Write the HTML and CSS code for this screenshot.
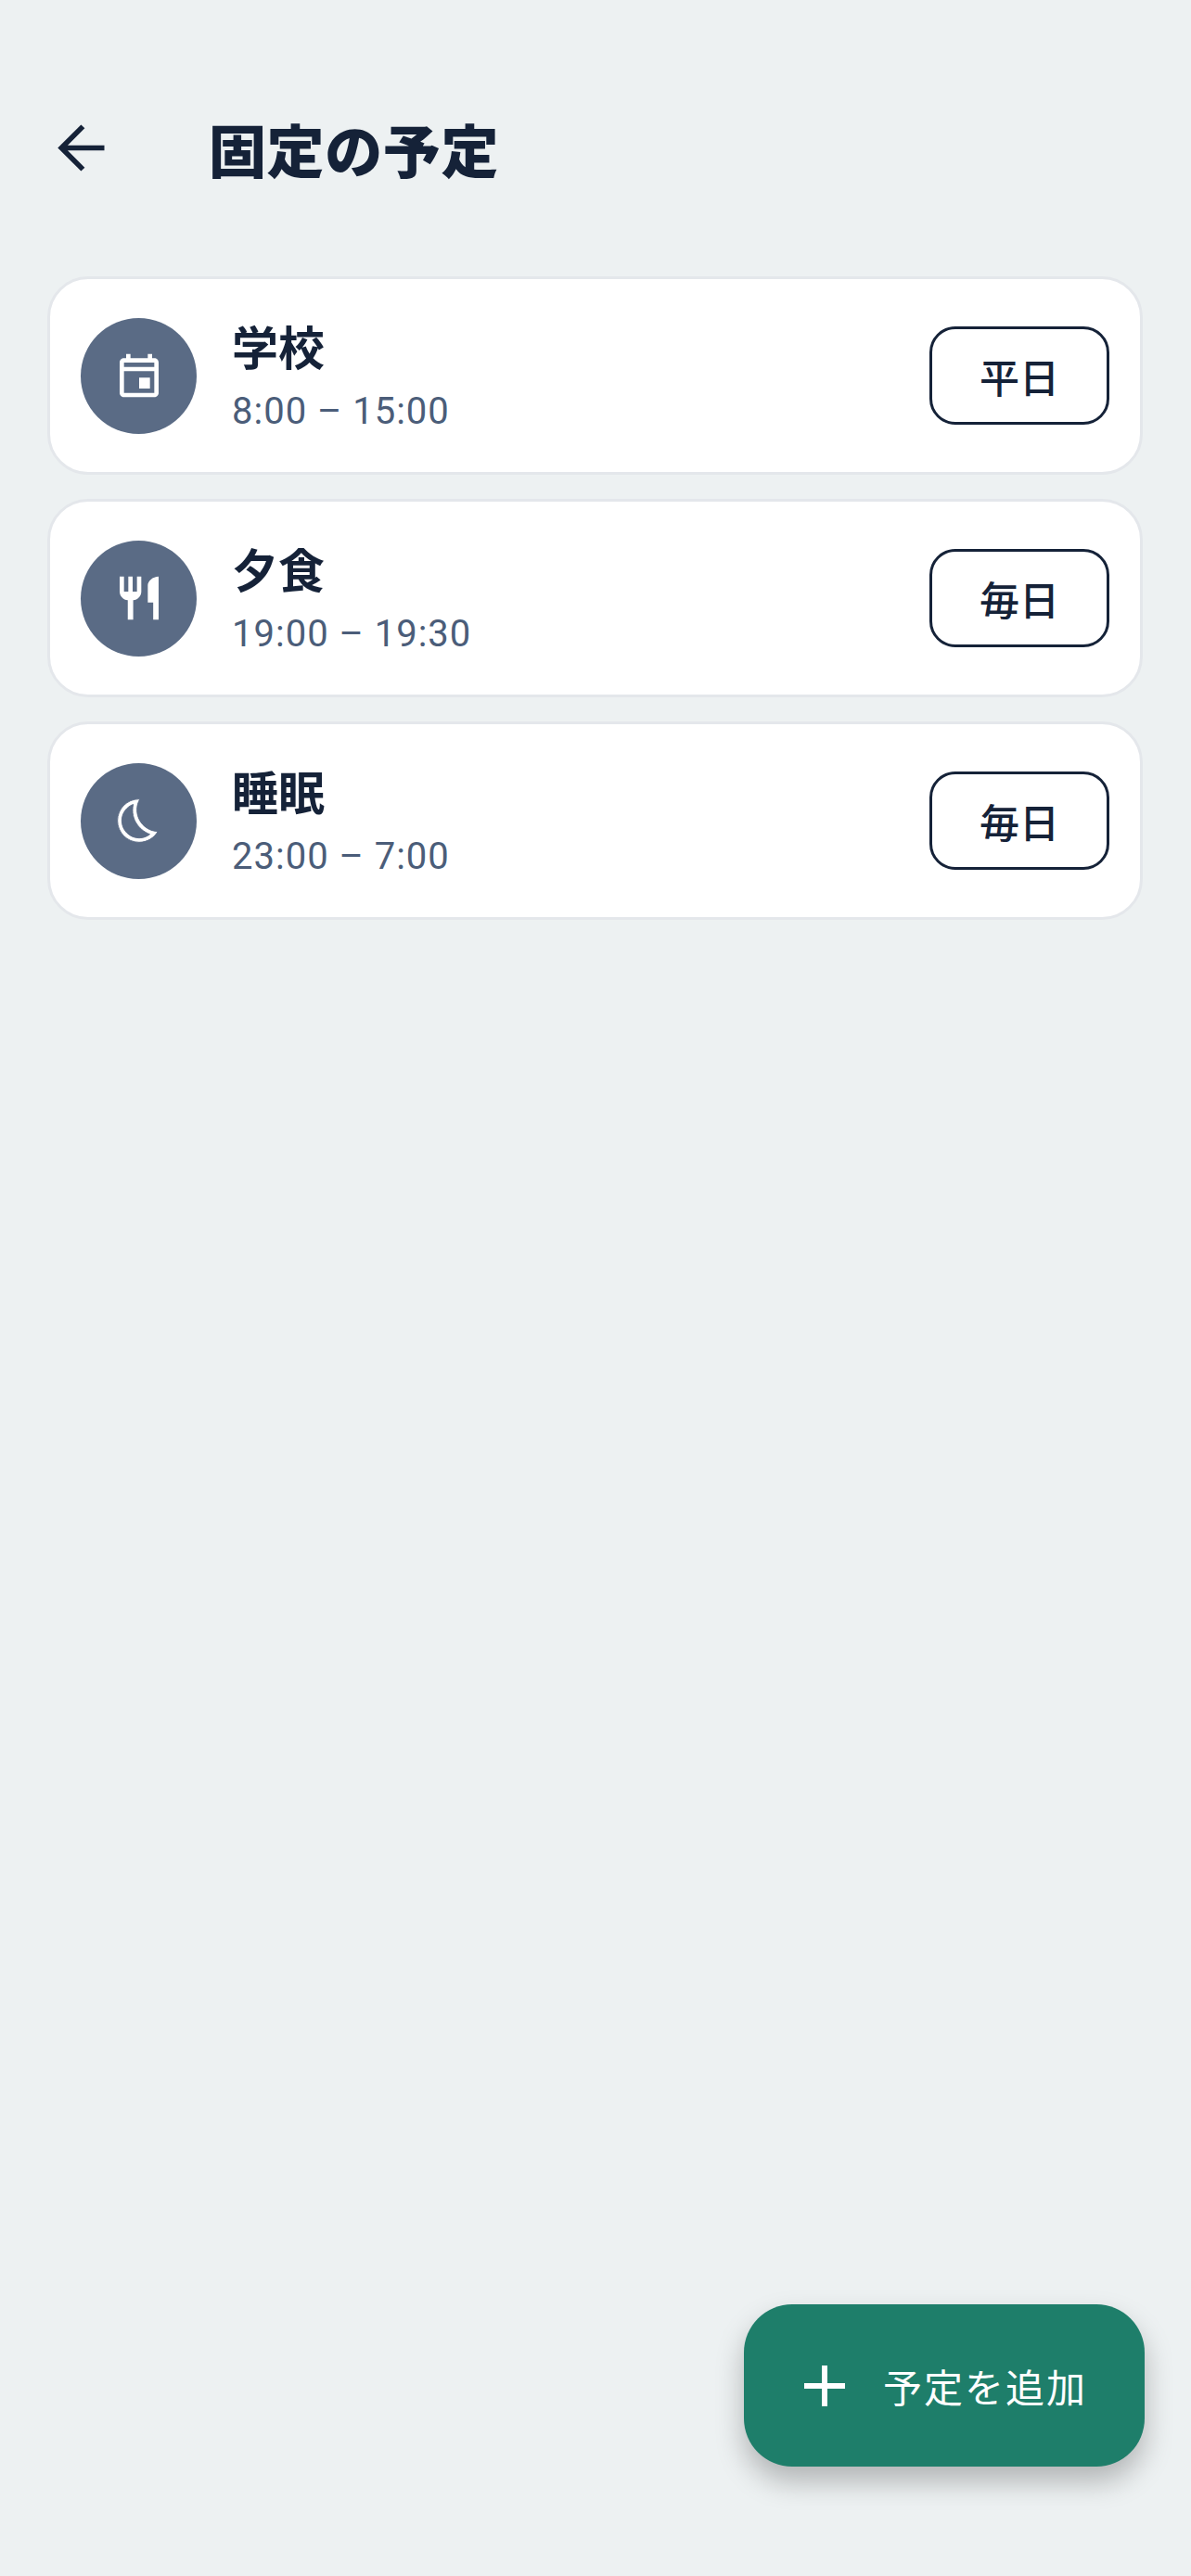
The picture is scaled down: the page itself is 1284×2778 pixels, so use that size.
FILE: index.html
```html
<!DOCTYPE html>
<html lang="ja">
<head>
    <title>固定の予定</title>
    <link rel="stylesheet" href="styles.css">
</head>
<body>
    <header class="top-bar">
        <svg class="back-icon" viewBox="0 0 24 24"><path d="M20 12H5.2M12.6 4.6 5.2 12l7.4 7.4" fill="none" stroke="currentColor" stroke-width="1.8"/></svg>
        <h1 class="page-title">固定の予定</h1>
    </header>

    <!-- Fixed schedule list -->
    <main class="schedule-list">
        <div class="schedule-card">
            <div class="icon-circle">
                <svg viewBox="0 0 24 24"><path d="M19 4h-1V2h-2v2H8V2H6v2H5c-1.11 0-1.99.9-1.99 2L3 20c0 1.1.89 2 2 2h14c1.1 0 2-.9 2-2V6c0-1.1-.9-2-2-2zm0 16H5V10h14v10zm0-12H5V6h14v2zm-2 5h-5v5h5v-5z"/></svg>
            </div>
            <div class="schedule-text">
                <div class="schedule-name">学校</div>
                <div class="schedule-time">8:00 – 15:00</div>
            </div>
            <div class="repeat-pill">平日</div>
        </div>

        <div class="schedule-card">
            <div class="icon-circle">
                <svg viewBox="0 0 24 24"><path d="M11 9H9V2H7v7H5V2H3v7c0 2.12 1.66 3.84 3.75 3.97V22h2.5v-9.03C11.34 12.84 13 11.12 13 9V2h-2v7zm5-3v8h2.5v8H21V2c-2.76 0-5 2.24-5 4z"/></svg>
            </div>
            <div class="schedule-text">
                <div class="schedule-name">夕食</div>
                <div class="schedule-time">19:00 – 19:30</div>
            </div>
            <div class="repeat-pill">毎日</div>
        </div>

        <div class="schedule-card">
            <div class="icon-circle">
                <svg class="moon-icon" viewBox="0 0 24 24"><path fill-rule="evenodd" d="M9.27 4.49c-1.63 7.54 3.75 12.41 7.66 13.8C15.54 19.38 13.81 20 12 20c-4.41 0-8-3.59-8-8 0-3.45 2.2-6.4 5.27-7.51M11.99 2.01C6.4 2.01 2 6.54 2 12c0 5.52 4.48 10 10 10 3.71 0 6.93-2.02 8.66-5.02-7.51-.25-12.09-8.43-8.32-14.97-.12-.01-.23-.01-.35-.01z"/></svg>
            </div>
            <div class="schedule-text">
                <div class="schedule-name">睡眠</div>
                <div class="schedule-time">23:00 – 7:00</div>
            </div>
            <div class="repeat-pill">毎日</div>
        </div>
    </main>

    <button type="button" class="add-button">
        <svg class="add-icon" viewBox="0 0 44 44"><path d="M22 0v44M0 22h44" fill="none" stroke="currentColor" stroke-width="6"/></svg>
        <span>予定を追加</span>
    </button>
</body>
</html>
```

FILE: styles.css
```css
html, body {
    height: 100%;
}

body {
    font-family: "Noto Sans CJK JP", Roboto, sans-serif;
    background-color: #edf1f2;
    color: #152238;
    margin: 0;
    padding: 0;
    position: relative;
    overflow: hidden;
}

.top-bar {
    display: flex;
    align-items: center;
    gap: 100px;
    padding: 120px 0 0 50px;
    height: 79px;
}

.back-icon {
    width: 75px;
    height: 75px;
    flex: none;
}

.page-title {
    font-size: 62px;
    line-height: 77px;
    letter-spacing: 0.6px;
    font-weight: 900;
    margin: 2px 0 0;
}

.schedule-list {
    display: flex;
    flex-direction: column;
    gap: 26px;
    margin: 99px 52px 0 51px;
}

.schedule-card {
    display: flex;
    align-items: center;
    box-sizing: border-box;
    height: 214px;
    padding: 0 33px;
    background-color: white;
    border: 3px solid #e4e7eb;
    border-radius: 44px;
}

.icon-circle {
    display: flex;
    align-items: center;
    justify-content: center;
    width: 125px;
    height: 125px;
    flex: none;
    border-radius: 50%;
    background-color: #5a6b85;
}

.icon-circle svg {
    width: 56px;
    height: 56px;
    fill: white;
}

/* thins the moon outline to match the lighter stroke */
.icon-circle .moon-icon {
    stroke: #5a6b85;
    stroke-width: 0.4;
}

.schedule-text {
    flex: 1;
    margin-left: 38px;
}

.schedule-name {
    font-size: 50px;
    line-height: 64px;
    font-weight: 700;
}

.schedule-time {
    font-family: Roboto, sans-serif;
    font-size: 40px;
    line-height: 54px;
    letter-spacing: 1px;
    margin-top: 13px;
    color: #4b5d79;
}

.repeat-pill {
    display: flex;
    align-items: center;
    justify-content: center;
    box-sizing: border-box;
    width: 194px;
    height: 106px;
    border: 3px solid #152238;
    border-radius: 28px;
    font-size: 43px;
    font-weight: 500;
}

.add-button {
    position: absolute;
    right: 50px;
    bottom: 118px;
    display: flex;
    align-items: center;
    width: 432px;
    height: 175px;
    padding: 0 0 0 65px;
    box-sizing: border-box;
    border: none;
    border-radius: 52px;
    background-color: #1e7e6a;
    color: white;
    font-family: inherit;
    font-size: 42px;
    letter-spacing: 2px;
    box-shadow: 0 16px 30px rgba(0, 0, 0, 0.25);
}

.add-icon {
    width: 44px;
    height: 44px;
    flex: none;
    margin-right: 41px;
}
```
